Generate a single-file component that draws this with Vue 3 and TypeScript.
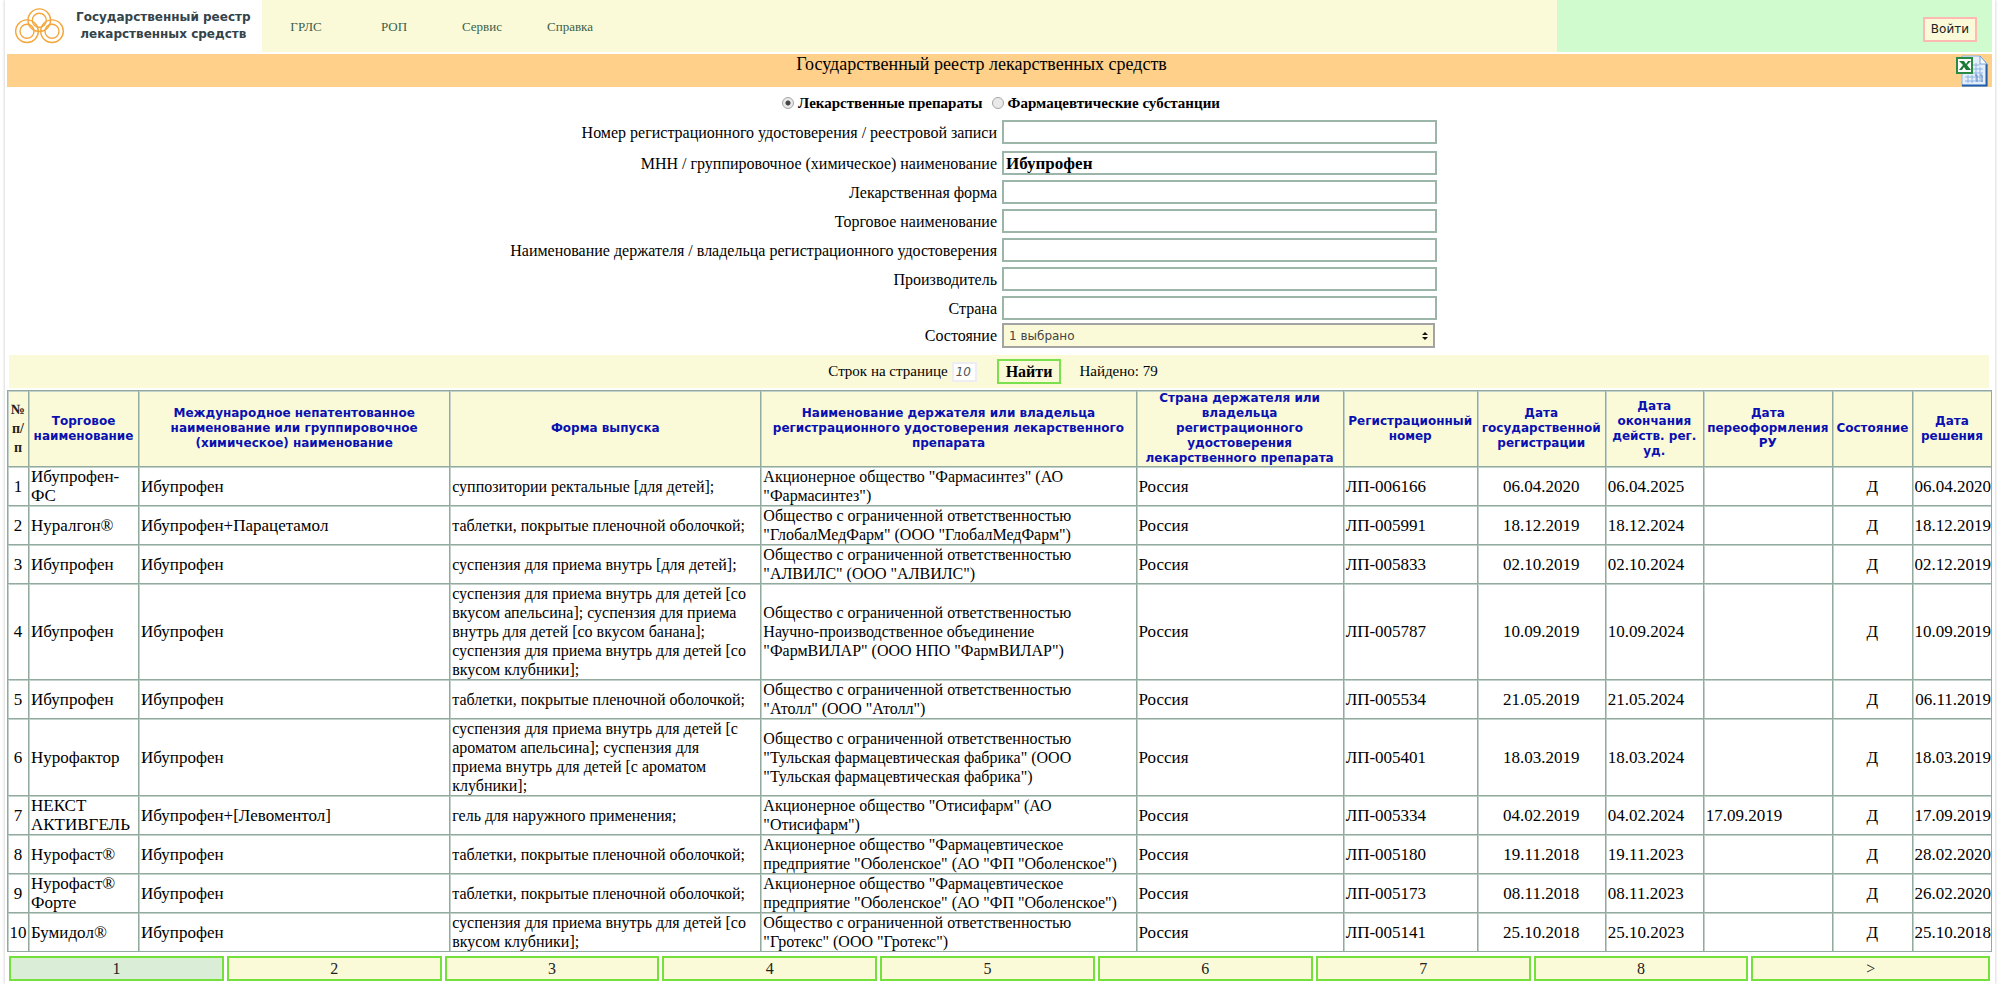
<script setup lang="ts">
import { ref } from 'vue'

interface Field {
  id: string
  label: string
  value: string
}

interface Column {
  key: string
  title: string
  align: 'left' | 'center' | 'right' | 'text'
}

const menu: string[] = ['ГРЛС', 'РОП', 'Сервис', 'Справка']
const kind = ref<string>('drug')
const state = ref<string>('one')
const perPage = ref<string>('10')

const fields = ref<Field[]>([
  { id: 'reg-number', label: 'Номер регистрационного удостоверения / реестровой записи', value: '' },
  { id: 'inn', label: 'МНН / группировочное (химическое) наименование', value: 'Ибупрофен' },
  { id: 'form', label: 'Лекарственная форма', value: '' },
  { id: 'trade', label: 'Торговое наименование', value: '' },
  { id: 'holder', label: 'Наименование держателя / владельца регистрационного удостоверения', value: '' },
  { id: 'maker', label: 'Производитель', value: '' },
  { id: 'country', label: 'Страна', value: '' },
])

const columns: Column[] = [
  { key: 'num', title: '№ п/ п', align: 'center' },
  { key: 'trade', title: 'Торговое наименование', align: 'left' },
  { key: 'inn', title: 'Международное непатентованное наименование или группировочное (химическое) наименование', align: 'left' },
  { key: 'form', title: 'Форма выпуска', align: 'text' },
  { key: 'holder', title: 'Наименование держателя или владельца регистрационного удостоверения лекарственного препарата', align: 'text' },
  { key: 'country', title: 'Страна держателя или владельца регистрационного удостоверения лекарственного препарата', align: 'left' },
  { key: 'reg', title: 'Регистрационный номер', align: 'left' },
  { key: 'start', title: 'Дата государственной регистрации', align: 'center' },
  { key: 'end', title: 'Дата окончания действ. рег. уд.', align: 'left' },
  { key: 'renewed', title: 'Дата переоформления РУ', align: 'left' },
  { key: 'state', title: 'Состояние', align: 'center' },
  { key: 'decision', title: 'Дата решения', align: 'right' },
]

const ooo = 'Общество с ограниченной ответственностью\n'
const coated = 'таблетки, покрытые пленочной оболочкой;'
const obolenskoe = 'Акционерное общество "Фармацевтическое предприятие "Оболенское" (АО "ФП "Оболенское")'

const rows: string[][] = [
  ['1', 'Ибупрофен-ФС', 'Ибупрофен', 'суппозитории ректальные [для детей];', 'Акционерное общество "Фармасинтез" (АО "Фармасинтез")', 'Россия', 'ЛП-006166', '06.04.2020', '06.04.2025', '', 'Д', '06.04.2020'],
  ['2', 'Нуралгон®', 'Ибупрофен+Парацетамол', coated, ooo + '"ГлобалМедФарм" (ООО "ГлобалМедФарм")', 'Россия', 'ЛП-005991', '18.12.2019', '18.12.2024', '', 'Д', '18.12.2019'],
  ['3', 'Ибупрофен', 'Ибупрофен', 'суспензия для приема внутрь [для детей];', ooo + '"АЛВИЛС" (ООО "АЛВИЛС")', 'Россия', 'ЛП-005833', '02.10.2019', '02.10.2024', '', 'Д', '02.12.2019'],
  ['4', 'Ибупрофен', 'Ибупрофен', 'суспензия для приема внутрь для детей [со вкусом апельсина]; суспензия для приема внутрь для детей [со вкусом банана]; суспензия для приема внутрь для детей [со вкусом клубники];', ooo + 'Научно-производственное объединение\n"ФармВИЛАР" (ООО НПО "ФармВИЛАР")', 'Россия', 'ЛП-005787', '10.09.2019', '10.09.2024', '', 'Д', '10.09.2019'],
  ['5', 'Ибупрофен', 'Ибупрофен', coated, ooo + '"Атолл" (ООО "Атолл")', 'Россия', 'ЛП-005534', '21.05.2019', '21.05.2024', '', 'Д', '06.11.2019'],
  ['6', 'Нурофактор', 'Ибупрофен', 'суспензия для приема внутрь для детей [с ароматом апельсина]; суспензия для\nприема внутрь для детей [с ароматом\nклубники];', ooo + '"Тульская фармацевтическая фабрика" (ООО "Тульская фармацевтическая фабрика")', 'Россия', 'ЛП-005401', '18.03.2019', '18.03.2024', '', 'Д', '18.03.2019'],
  ['7', 'НЕКСТ АКТИВГЕЛЬ', 'Ибупрофен+[Левоментол]', 'гель для наружного применения;', 'Акционерное общество "Отисифарм" (АО "Отисифарм")', 'Россия', 'ЛП-005334', '04.02.2019', '04.02.2024', '17.09.2019', 'Д', '17.09.2019'],
  ['8', 'Нурофаст®', 'Ибупрофен', coated, obolenskoe, 'Россия', 'ЛП-005180', '19.11.2018', '19.11.2023', '', 'Д', '28.02.2020'],
  ['9', 'Нурофаст® Форте', 'Ибупрофен', coated, obolenskoe, 'Россия', 'ЛП-005173', '08.11.2018', '08.11.2023', '', 'Д', '26.02.2020'],
  ['10', 'Бумидол®', 'Ибупрофен', 'суспензия для приема внутрь для детей [со вкусом клубники];', ooo + '"Гротекс" (ООО "Гротекс")', 'Россия', 'ЛП-005141', '25.10.2018', '25.10.2023', '', 'Д', '25.10.2018'],
]

const pages: string[] = ['1', '2', '3', '4', '5', '6', '7', '8', '>']
const page = ref<string>('1')
</script>

<template>
  <div class="page">
    <header class="top">
      <a class="brand" href="#">
        <svg class="logo" viewBox="0 0 50 36" aria-hidden="true">
          <g fill="none" stroke="#f3a73c" stroke-width="1.4">
            <circle cx="24.300" cy="12.200" r="11.300" />
            <circle cx="24.300" cy="12.200" r="7" />
            <circle cx="12" cy="23.200" r="11.300" />
            <circle cx="12" cy="23.200" r="7" />
            <circle cx="37" cy="23.200" r="11.300" />
            <circle cx="37" cy="23.200" r="7" />
          </g>
        </svg>
        <span class="brand-text">Государственный реестр<br />лекарственных средств</span>
      </a>
      <nav class="menu">
        <a v-for="item in menu" :key="item" href="#">{{ item }}</a>
      </nav>
      <div class="account">
        <button type="button" class="login">Войти</button>
      </div>
    </header>

    <div class="title-bar">
      <h1>Государственный реестр лекарственных средств</h1>
      <button type="button" class="export" aria-label="Excel">
        <svg viewBox="0 0 32 32" aria-hidden="true">
          <path d="M6 1h18l7 8v22H6z" fill="#e4effb" stroke="#8db4e2" />
          <path d="M30.500 9v21.500H6" fill="none" stroke="#1f5fae" stroke-width="2" />
          <path d="M24 1v8h7z" fill="#fff" stroke="#6fa0d8" />
          <path d="M17 10h7M17 14h10M17 18h10M9 22h18M9 26h18M20 8v18M24 12v14M12 20v8M16 20v8" fill="none" stroke="#8db4e2" />
          <path d="M19 20h2v7M24 20h2v7" fill="none" stroke="#5f86b8" />
          <rect x="1" y="3" width="15" height="15" fill="#fff" stroke="#2c8a44" stroke-width="2" />
          <path d="M3 6h5l2 3 2-3h3l-4 4 4 5h-5l-2-3-2 3H3l4-5z" fill="#1c7a36" />
        </svg>
      </button>
    </div>

    <form class="search" @submit.prevent>
      <div class="kinds">
        <label><input v-model="kind" type="radio" name="kind" value="drug" />Лекарственные препараты</label>
        <label><input v-model="kind" type="radio" name="kind" value="substance" />Фармацевтические субстанции</label>
      </div>

      <div class="fields">
        <div v-for="field in fields" :key="field.id" class="field">
          <label :for="field.id">{{ field.label }}</label>
          <input :id="field.id" v-model="field.value" type="text" />
        </div>
        <div class="field field-state">
          <label for="state">Состояние</label>
          <div class="select-box">
            <select id="state" v-model="state">
              <option value="one">1 выбрано</option>
            </select>
            <svg class="arrows" viewBox="0 0 6 8" aria-hidden="true">
              <path d="M0 3l3-3 3 3zM0 5l3 3 3-3z" fill="#111" />
            </svg>
          </div>
        </div>
      </div>

      <div class="actions">
        <label for="per-page">Строк на странице</label>
        <input id="per-page" v-model="perPage" type="text" />
        <button type="submit">Найти</button>
        <span>Найдено: 79</span>
      </div>
    </form>

    <table class="results">
      <colgroup>
        <col v-for="column in columns" :key="column.key" :class="'col-' + column.key" />
      </colgroup>
      <thead>
        <tr>
          <th v-for="column in columns" :key="column.key" scope="col" :class="{ index: column.key === 'num' }">
            {{ column.title }}
          </th>
        </tr>
      </thead>
      <tbody>
        <tr v-for="row in rows" :key="row[0]">
          <td v-for="(cell, i) in row" :key="columns[i].key" :class="columns[i].align">{{ cell }}</td>
        </tr>
      </tbody>
    </table>

    <nav class="pager">
      <button v-for="p in pages" :key="p" type="button" :class="{ current: p === page }" @click="page = p">{{ p }}</button>
    </nav>
  </div>
</template>

<style>
body {
  background: #fff;
}
</style>

<style scoped>
.page {
  box-sizing: border-box;
  margin: 0 5px;
  padding: 0 3px 3px 2px;
  box-shadow: 0 0 3px rgba(0, 0, 0, 0.25);
  color: #000;
  font: 17px/19px "Liberation Serif", serif;
}
.page *,
.page *::before {
  box-sizing: border-box;
}
.top {
  display: flex;
  height: 52px;
}
.brand {
  display: flex;
  flex: none;
  align-items: center;
  width: 255px;
  padding-left: 8px;
  gap: 11px;
  color: #33434a;
  text-decoration: none;
}
.logo {
  flex: none;
  width: 50px;
  height: 36px;
}
.brand-text {
  font: bold 12px/17px "DejaVu Sans", sans-serif;
  text-align: center;
  white-space: nowrap;
}
.menu {
  display: flex;
  flex: 1;
  align-items: center;
  background: #fafad9;
}
.menu a {
  width: 88px;
  color: #3c5f48;
  font-size: 13px;
  text-align: center;
  text-decoration: none;
}
.account {
  display: flex;
  flex: none;
  align-items: center;
  justify-content: flex-end;
  width: 435px;
  padding: 6px 15px 0 0;
  background: #cffbce;
}
.login {
  height: 25px;
  padding: 0 6px;
  border: 2px solid #ffb9b3;
  background: #fafad9;
  color: #222;
  font: 12px/16px "DejaVu Sans", sans-serif;
}
.title-bar {
  display: flex;
  height: 33px;
  margin-top: 2px;
  padding-right: 4px;
  background: #ffd08a;
}
.title-bar h1 {
  flex: 1;
  margin: 0;
  font-size: 18px;
  font-weight: normal;
  line-height: 20px;
  text-align: center;
}
.export {
  width: 32px;
  height: 32px;
  margin-top: 1px;
  padding: 0;
  border: 0;
  background: none;
}
.export svg {
  display: block;
  width: 32px;
  height: 32px;
}
.kinds {
  display: flex;
  justify-content: center;
  height: 33px;
  gap: 9px;
  padding: 6px 0 0 3px;
  font-size: 15px;
  font-weight: bold;
}
.kinds label {
  display: flex;
  align-items: center;
  height: 20px;
}
.kinds input {
  width: 12px;
  height: 12px;
  margin: 0 4px 0 0;
  appearance: none;
  border: 1px solid #a5a5a5;
  border-radius: 50%;
  background: #e9e9e9;
}
.kinds input:checked {
  background: radial-gradient(circle, #444 0 2px, #e9e9e9 3px);
}
.fields {
  display: grid;
  gap: 5px;
}
.field {
  display: grid;
  grid-template-columns: 1fr 1fr;
  gap: 5px;
  align-items: center;
}
.field:first-child {
  margin-bottom: 2px;
}
.field label {
  font-size: 16px;
  text-align: right;
}
.field input {
  width: 435px;
  height: 24px;
  padding: 2px 2px 0;
  border: 2px solid #9bb5a8;
  border-radius: 0;
  background: #fff;
  color: #000;
  font: bold 17px/19px "Liberation Serif", serif;
  outline: 0;
}
.field-state {
  margin-top: -2px;
}
.select-box {
  display: grid;
  align-items: center;
  width: 433px;
}
.select-box > * {
  grid-area: 1 / 1;
}
.select-box select {
  width: 100%;
  height: 25px;
  padding: 0 5px;
  appearance: none;
  border: 2px solid #a3a3a3;
  border-radius: 0;
  background: #fafad9;
  color: #444;
  font: 12px/16px "DejaVu Sans", sans-serif;
}
.arrows {
  justify-self: end;
  width: 6px;
  height: 8px;
  margin-right: 7px;
  pointer-events: none;
}
.actions {
  display: flex;
  align-items: center;
  justify-content: center;
  height: 33px;
  margin: 7px 3px 2px 2px;
  padding-right: 12px;
  background: #fafad9;
  font-size: 15px;
}
.actions input {
  width: 25px;
  height: 20px;
  margin: 0 20px 0 4px;
  padding: 0 2px;
  border: 2px solid #ededf2;
  background: #fff;
  color: #555;
  font: italic 12px/16px "DejaVu Sans", sans-serif;
}
.actions button {
  height: 25px;
  margin-right: 18px;
  padding: 0 7px;
  border: 2px solid #7be04e;
  background: #fafad9;
  color: #000;
  font: bold 16px/19px "Liberation Serif", serif;
}
.results {
  width: 100%;
  table-layout: fixed;
  border-collapse: collapse;
}
.results th,
.results td {
  padding: 0 1px 0 2px;
  border: 1px solid #92ab9e;
  box-shadow: inset 1px 1px #c2d1c9;
}
.results th {
  padding: 0;
  background: #fafad9;
  color: #0a10b0;
  font: bold 12px/15px "DejaVu Sans", sans-serif;
}
.results th.index {
  padding: 0 2px;
  color: #222;
  font: bold 14px/19px "Liberation Serif", serif;
}
.left,
.text {
  text-align: left;
}
.text {
  font-size: 16px;
  white-space: pre-line;
}
.center {
  text-align: center;
}
.right {
  text-align: right;
}
.results td.center,
.results td.right {
  padding: 0;
}
.col-num { width: 21px; }
.col-trade { width: 110px; }
.col-inn { width: 311px; }
.col-form { width: 311px; }
.col-holder { width: 375px; }
.col-country { width: 207px; }
.col-reg { width: 134px; }
.col-start { width: 128px; }
.col-end { width: 98px; }
.col-renewed { width: 129px; }
.col-state { width: 80px; }
.col-decision { width: 79px; }
.pager {
  display: grid;
  grid-template-columns: repeat(8, 9fr) 10fr;
  gap: 3px;
  margin: 4px 2px 0;
}
.pager button {
  height: 25px;
  padding: 0;
  border: 2px solid #74e03c;
  background: #fafad9;
  color: #222;
  font: 16px/19px "Liberation Serif", serif;
}
.pager button.current {
  background: #d9edd7;
}
</style>
